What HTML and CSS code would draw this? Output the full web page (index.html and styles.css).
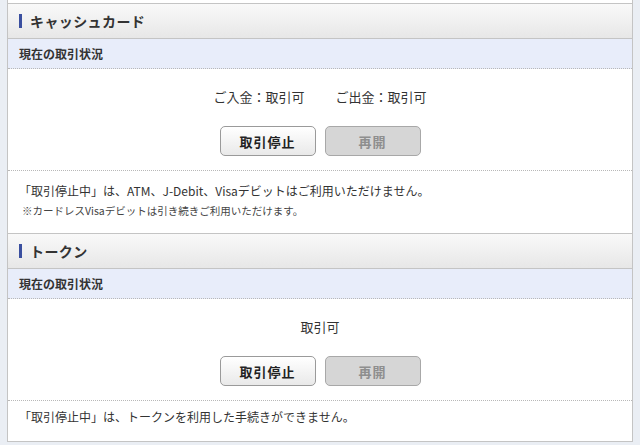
FILE: index.html
```html
<!DOCTYPE html>
<html lang="ja">
<head>
<meta charset="utf-8">
<link rel="stylesheet" href="styles.css">
</head>
<body>
<div class="panel">
  <div class="spacer"></div>

  <section class="block">
    <h2 class="block-title"><span class="bar"></span>キャッシュカード</h2>
    <h3 class="sub-title">現在の取引状況</h3>
    <div class="status">
      <p class="status-text"><span>ご入金：取引可</span><span class="gap">ご出金：取引可</span></p>
      <div class="buttons">
        <button class="btn btn-stop">取引停止</button>
        <button class="btn btn-resume">再開</button>
      </div>
    </div>
    <div class="notes">
      <p class="note">「取引停止中」は、ATM、J-Debit、Visaデビットはご利用いただけません。</p>
      <p class="note-small">※カードレスVisaデビットは引き続きご利用いただけます。</p>
    </div>
  </section>

  <section class="block">
    <h2 class="block-title"><span class="bar"></span>トークン</h2>
    <h3 class="sub-title">現在の取引状況</h3>
    <div class="status">
      <p class="status-text"><span>取引可</span></p>
      <div class="buttons">
        <button class="btn btn-stop">取引停止</button>
        <button class="btn btn-resume">再開</button>
      </div>
    </div>
    <div class="notes notes-last">
      <p class="note">「取引停止中」は、トークンを利用した手続きができません。</p>
    </div>
  </section>
</div>
</body>
</html>
```

FILE: styles.css
```css
* { box-sizing: border-box; }

html, body {
  margin: 0;
  padding: 0;
  background: #eaeef4;
  font-family: "Noto Sans CJK JP", "Noto Sans", sans-serif;
  color: #333;
}

.panel {
  margin: 0 7px;
  width: 626px;
  background: #fff;
  border-left: 1px solid #c4c4c4;
  border-right: 1px solid #c4c4c4;
  border-bottom: 1px solid #c4c4c4;
  height: 442px;
}

.spacer { height: 3px; }

.block-title {
  margin: 0;
  height: 36px;
  border-top: 1px solid #c4c4c4;
  border-bottom: 1px solid #c4c4c4;
  background: linear-gradient(#f9f9f9, #e7e7e7);
  display: flex;
  align-items: center;
  padding-left: 11px;
  font-size: 14px;
  font-weight: 700;
  letter-spacing: 0.4px;
  color: #333;
}

.bar {
  width: 3px;
  height: 14px;
  background: #3a4f9f;
  margin-right: 8px;
}

.sub-title {
  margin: 0;
  height: 30px;
  background: #e8edfa;
  border-bottom: 1px dotted #b8b8b8;
  display: flex;
  align-items: center;
  padding-left: 11px;
  font-size: 12px;
  font-weight: 700;
  color: #333;
}

.status {
  height: 102px;
  padding-top: 19px;
  border-bottom: 1px dotted #b8b8b8;
  display: flex;
  flex-direction: column;
  align-items: center;
}

.status-text {
  margin: 0;
  height: 18px;
  line-height: 18px;
  font-size: 13px;
  color: #333;
}

.gap { margin-left: 31px; }

.buttons {
  margin-top: 20px;
  display: flex;
  gap: 9px;
}

.btn {
  width: 96px;
  height: 30px;
  border-radius: 5px;
  font-family: inherit;
  font-size: 13px;
  font-weight: 700;
  letter-spacing: 1px;
  padding: 0;
}

.btn-stop {
  background: linear-gradient(#ffffff, #e9e9e9);
  border: 1px solid #9a9a9a;
  color: #222;
}

.btn-resume {
  background: #d6d6d6;
  border: 1px solid #a8a8a8;
  color: #8e8e8e;
}

.notes {
  height: 62px;
  padding: 10px 0 0 11px;
}

.notes-last {
  height: 38px;
  padding-top: 6px;
}

.note {
  margin: 0;
  height: 20px;
  line-height: 20px;
  font-size: 12px;
  color: #333;
}

.note-small {
  margin: 0 0 0 3px;
  height: 20px;
  line-height: 20px;
  font-size: 10.5px;
  color: #444;
}
```
